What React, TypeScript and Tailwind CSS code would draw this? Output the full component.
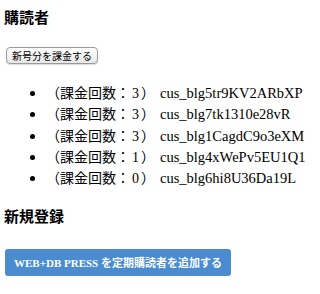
export default function App() {
  const items = [
    ["3", "cus_blg5tr9KV2ARbXP"],
    ["3", "cus_blg7tk1310e28vR"],
    ["3", "cus_blg1CagdC9o3eXM"],
    ["1", "cus_blg4xWePv5EU1Q1"],
    ["0", "cus_blg6hi8U36Da19L"],
  ];
  const serif = { fontFamily: '"Liberation Serif", "Noto Sans CJK JP", serif' } as const;
  return (
    <div className="w-[320px] h-[294px] bg-white text-black px-[4px] pt-[8px]" style={serif}>
      <h2 className="text-[15px] font-bold leading-[20px]">購読者</h2>
      <button
        className="mt-[19px] ml-[2px] h-[17px] px-[5px] text-[10px] leading-[15px] rounded-[4px] border border-[#9a9a9a] bg-gradient-to-b from-white to-[#e8e8e8] shadow-[0_1px_1px_rgba(0,0,0,0.15)]"
        style={{ fontFamily: '"Noto Sans CJK JP", sans-serif' }}
      >
        新号分を課金する
      </button>
      <ul className="mt-[16px] text-[14.5px] leading-[21.3px]">
        {items.map(([n, id]) => (
          <li key={id} className="flex items-center h-[21.3px]">
            <span className="ml-[26px] w-[5px] h-[5px] shrink-0 rounded-full bg-black" />
            <span className="ml-[11px] w-[114px] shrink-0 whitespace-nowrap text-[14px]">
              （課金回数：<span className="mx-[2px]">{n}</span>）
            </span>
            <span className="whitespace-nowrap">{id}</span>
          </li>
        ))}
      </ul>
      <h2 className="mt-[18px] text-[15px] font-bold leading-[20px]">新規登録</h2>
      <button className="mt-[22px] ml-[1px] w-[226px] h-[27px] rounded-[3px] bg-[#4a8ccf] text-white text-[11px] font-bold whitespace-nowrap">
        WEB+DB PRESS を定期購読者を追加する
      </button>
    </div>
  );
}
